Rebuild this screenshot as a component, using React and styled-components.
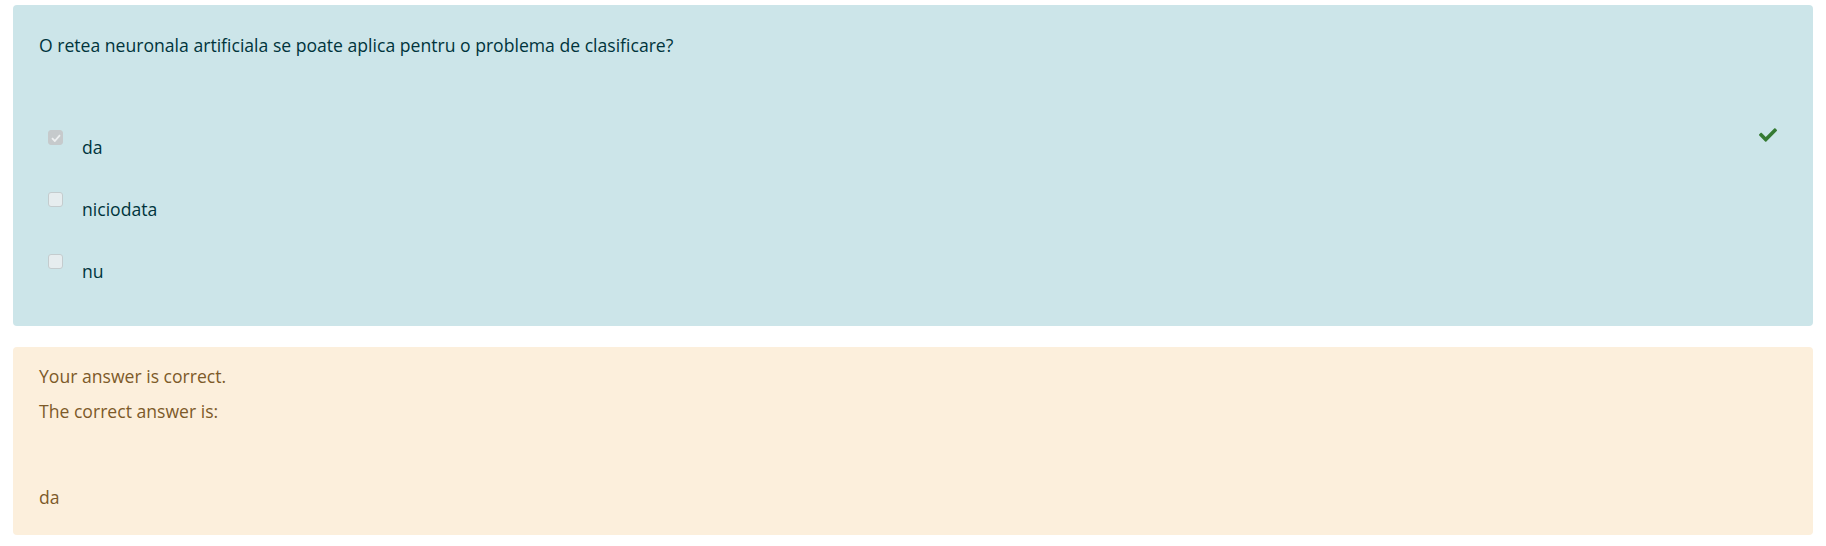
import React from "react";
import styled, { createGlobalStyle } from "styled-components";
import { FaCheck } from "react-icons/fa";

const FONT = `"Open Sans", "Noto Sans", "Liberation Sans", sans-serif`;

const GlobalStyle = createGlobalStyle`
  html, body { margin: 0; padding: 0; background: #ffffff; }
  body { font-family: ${FONT}; font-size: 17.6px; }
`;

const Page = styled.div`
  display: flex;
  flex-direction: column;
  gap: 21px;
  padding: 5px 13px 0 13px;
`;

const Formulation = styled.div`
  background: #cce5e9;
  color: #00343c;
  border-radius: 4px;
  padding: 27px 36px 42px 26px;
`;

const Question = styled.div`
  font-size: 17.6px;
  line-height: 26px;
`;

const Answers = styled.div`
  margin-top: 72px;
  display: flex;
  flex-direction: column;
  gap: 32px;
`;

const Row = styled.div`
  display: flex;
  align-items: flex-start;
  height: 30px;
`;

const Box = styled.span`
  flex: none;
  width: 15px;
  height: 15px;
  box-sizing: border-box;
  margin-left: 9px;
  border-radius: 3px;
  display: flex;
  align-items: center;
  justify-content: center;
  background: ${(p) => (p.$checked ? "#c6cacc" : "#e6edef")};
  border: 1px solid ${(p) => (p.$checked ? "#c6cacc" : "#c4ccce")};
`;

const Label = styled.span`
  margin-left: 19px;
  padding-top: 4px;
  font-size: 17.6px;
  line-height: 26px;
`;

const Mark = styled.span`
  margin-left: auto;
  margin-top: -4px;
  color: #357a32;
  display: flex;
`;

const Outcome = styled.div`
  background: #fcefdc;
  color: #7d5a29;
  border-radius: 4px;
  padding: 16px 26px 25px 26px;
`;

const Line = styled.div`
  font-size: 17.6px;
  line-height: 26px;
  margin-top: ${(p) => p.$gap || 0}px;
`;

const answers = [
  { text: "da", checked: true },
  { text: "niciodata", checked: false },
  { text: "nu", checked: false },
];

export default function App() {
  return (
    <>
      <GlobalStyle />
      <Page>
        <Formulation>
          <Question>
            O retea neuronala artificiala se poate aplica pentru o problema de clasificare?
          </Question>
          <Answers>
            {answers.map((a) => (
              <Row key={a.text}>
                <Box $checked={a.checked}>
                  {a.checked && (
                    <svg width="10" height="8" viewBox="0 0 10 8">
                      <path d="M1 4.2 L3.8 7 L9 1.2" fill="none" stroke="#eef0f1" strokeWidth="1.8" />
                    </svg>
                  )}
                </Box>
                <Label>{a.text}</Label>
                {a.checked && (
                  <Mark>
                    <FaCheck size={18} />
                  </Mark>
                )}
              </Row>
            ))}
          </Answers>
        </Formulation>
        <Outcome>
          <Line>Your answer is correct.</Line>
          <Line $gap={9}>The correct answer is:</Line>
          <Line $gap={60}>da</Line>
        </Outcome>
      </Page>
    </>
  );
}
